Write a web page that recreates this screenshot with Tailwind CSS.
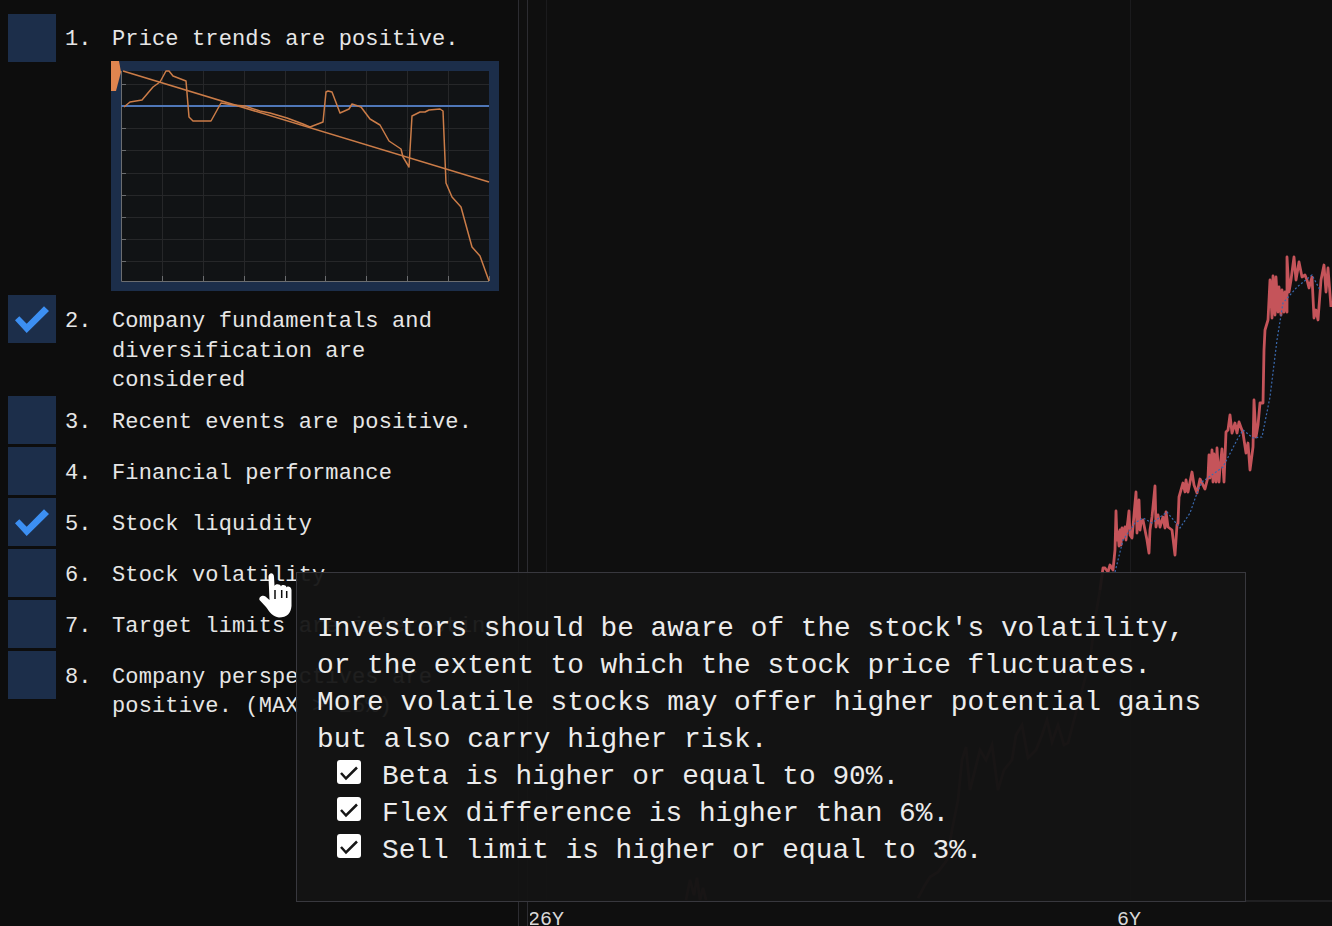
<!DOCTYPE html>
<html lang="en">
  <head>
    <meta charset="UTF-8" />
    <title>Checklist</title>
    <script src="https://cdn.jsdelivr.net/npm/@tailwindcss/browser@4"></script>
  </head>
  <body class="bg-[#0d0d0d]">
    <div class="relative w-[1332px] h-[926px] overflow-hidden flex text-[#e6e6e6] font-['Liberation_Mono',monospace] text-[22px] leading-[29.5px] tracking-[0.13px]">
      <!-- checklist -->
      <div class="w-[518px] shrink-0 pt-[14px] pl-2 flex flex-col">
        <div class="flex h-[47px]">
          <div class="w-12 h-12 shrink-0 bg-[#1c2e4a]"></div>
          <div class="w-[56px] shrink-0 pl-[9px] pt-[11px]">1.</div>
          <div class="pt-[11px] whitespace-nowrap">Price trends are positive.</div>
        </div>
        <div class="ml-[103px] w-[388px] h-[230px] border-[10px] border-[#1c2e4a] bg-[#111315]">
          <svg width="368" height="210" viewBox="121 71 368 210" fill="none" class="block overflow-visible">
            <path stroke="#262729" d="M121 84.500H489M121 128.500H489M121 150.500H489M121 173.500H489M121 195.500H489M121 217.500H489M121 239.500H489M121 261.500H489M162.500 71V281M203.500 71V281M244.500 71V281M285.500 71V281M325.500 71V281M366.500 71V281M407.500 71V281M448.500 71V281" />
            <path stroke="#6b6d70" d="M121.500 71V281.500H489M121 84.500H126M121 128.500H126M121 150.500H126M121 173.500H126M121 195.500H126M121 217.500H126M121 239.500H126M121 261.500H126M162.500 276V281M203.500 276V281M244.500 276V281M285.500 276V281M325.500 276V281M366.500 276V281M407.500 276V281M448.500 276V281M489.500 276V281" />
            <path stroke="#4f77b8" stroke-width="2" d="M121 106H489" />
            <path stroke="#cb7c48" stroke-width="1.600" d="M123 71L489 182" />
            <polyline stroke="#cb7c48" stroke-width="1.500" stroke-linejoin="round" points="124,107 130,102 142,100 153,87 160,82 166,71 169,71 173,76 186,81 189,117 193,121 211,121 221,103 233,105 245,106 260,111 270,113 287,118 303,124 310,127 323,122 326,92 328,91 332,92 340,113 349,109 352,104 361,107 370,119 380,125 389,141 401,149 403,157 409,167 412,116 420,112 425,112 429,110 440,109 443,111 446,183 452,197 461,207 472,247 480,256 489,281" />
            <polygon fill="#e0854f" points="111,61 119,61 121,72 116,91 111,91" />
          </svg>
        </div>
        <div class="flex mt-[4px] h-[98px]">
          <div class="w-12 h-12 shrink-0 bg-[#1c2e4a] flex">
            <svg width="48" height="48" viewBox="0 0 48 48"><polygon fill="#3c8ff2" points="7,25.300 18.700,38 41,16 36,11.300 18.700,28.700 11.300,21.300" /></svg>
          </div>
          <div class="w-[56px] shrink-0 pl-[9px] pt-[12px]">2.</div>
          <div class="pt-[12px] w-[390px]">Company fundamentals and diversification are considered</div>
        </div>
        <div class="flex mt-[3px]">
          <div class="w-12 h-12 shrink-0 bg-[#1c2e4a]"></div>
          <div class="w-[56px] shrink-0 pl-[9px] pt-[11.5px]">3.</div>
          <div class="pt-[11.5px]">Recent events are positive.</div>
        </div>
        <div class="flex mt-[3px]">
          <div class="w-12 h-12 shrink-0 bg-[#1c2e4a]"></div>
          <div class="w-[56px] shrink-0 pl-[9px] pt-[11.5px]">4.</div>
          <div class="pt-[11.5px]">Financial performance</div>
        </div>
        <div class="flex mt-[3px]">
          <div class="w-12 h-12 shrink-0 bg-[#1c2e4a] flex">
            <svg width="48" height="48" viewBox="0 0 48 48"><polygon fill="#3c8ff2" points="7,25.300 18.700,38 41,16 36,11.300 18.700,28.700 11.300,21.300" /></svg>
          </div>
          <div class="w-[56px] shrink-0 pl-[9px] pt-[11.5px]">5.</div>
          <div class="pt-[11.5px]">Stock liquidity</div>
        </div>
        <div class="flex mt-[3px]">
          <div class="w-12 h-12 shrink-0 bg-[#1c2e4a]"></div>
          <div class="w-[56px] shrink-0 pl-[9px] pt-[11.5px]">6.</div>
          <div class="pt-[11.5px]">Stock volatility</div>
        </div>
        <div class="flex mt-[3px]">
          <div class="w-12 h-12 shrink-0 bg-[#1c2e4a]"></div>
          <div class="w-[56px] shrink-0 pl-[9px] pt-[11.5px]">7.</div>
          <div class="pt-[11.5px]">Target limits are interesting</div>
        </div>
        <div class="flex mt-[3px]">
          <div class="w-12 h-12 shrink-0 bg-[#1c2e4a]"></div>
          <div class="w-[56px] shrink-0 pl-[9px] pt-[11.5px]">8.</div>
          <div class="pt-[11.5px] w-[390px]">Company perspectives are positive. (MAX &gt; 25%)</div>
        </div>
      </div>

      <!-- price chart -->
      <div class="relative flex-1 bg-[#0f0f0f] border-l border-[#2c2c31]">
        <svg width="813" height="926" viewBox="519 0 813 926" fill="none" class="absolute left-0 top-0">
          <path stroke="#2c2c31" d="M527.500 0V926" />
          <path stroke="#1b1b1d" d="M546.500 0V900M1130.500 0V900" />
          <path stroke="#333336" d="M519 901H1332" />
          <polyline stroke="#c5545a" stroke-opacity="0.5" stroke-width="2.500" points="686,900 690,880 694,895 697,878 700,900 703,888 706,900" />
          <polyline stroke="#c5545a" stroke-opacity="0.5" stroke-width="2.500" points="918,898 925,885 930,877 938,872 947,860 952,830 958,800 962,760 966,747 970,790 975,770 980,750 986,760 992,745 998,790 1004,770 1012,760 1016,735 1022,725 1028,758 1036,750 1042,735 1047,720 1052,742 1058,725 1064,745 1068,743 1074,720 1082,690 1090,660 1095,620 1100,590" />
          <polyline stroke="#c5545a" stroke-width="2.800" stroke-linejoin="round" points="1100,590 1103,568 1105,568 1108,572 1110,565 1113,570 1115,550 1116,511 1117,540 1118,532 1119,546 1120,530 1121,545 1122,528 1123,538 1125,527 1126,540 1127,528 1128,520 1129,511 1130,535 1132,538 1134,515 1136,492 1137,533 1139,500 1140,530 1141,523 1143,520 1145,530 1147,540 1149,553 1150,530 1152,517 1155,486 1156,527 1158,515 1160,527 1163,517 1165,528 1166,512 1168,527 1172,530 1175,555 1177,525 1178,523 1179,497 1183,483 1185,492 1186,480 1188,492 1192,472 1194,485 1197,493 1200,479 1205,489 1208,477 1209,455 1210,478 1212,450 1213,482 1214,454 1216,482 1217,448 1219,482 1220,468 1222,449 1224,482 1226,432 1228,430 1230,415 1232,433 1235,423 1237,433 1239,422 1243,433 1246,453 1248,443 1250,470 1253,447 1254,400 1256,437 1258,425 1260,403 1263,403 1264,350 1265,330 1268,320 1270,280 1272,318 1273,276 1275,315 1276,277 1278,312 1279,287 1281,315 1282,290 1284,312 1285,292 1287,312 1287,257 1289,292 1291,280 1294,257 1296,280 1299,262 1302,277 1305,275 1307,280 1309,288 1312,277 1314,318 1316,310 1318,320 1321,280 1324,265 1326,292 1328,268 1331,307" />
          <polyline stroke="#3a6ab0" stroke-width="1.200" stroke-dasharray="2 2" points="1115,572 1123,540 1135,523 1143,518 1152,523 1167,512 1180,528 1190,513 1197,493 1202,482 1223,467 1237,440 1243,430 1253,438 1262,437 1270,397 1277,340 1283,303 1297,287 1312,275 1320,290" />
        </svg>
        <div class="absolute left-[11px] top-[907px] w-[50px] overflow-hidden text-[20px] leading-[26px] text-[#d8d8d8] tracking-normal"><span class="block -ml-[2px]">26Y</span></div>
        <div class="absolute left-[598px] top-[907px] text-[20px] leading-[26px] text-[#d8d8d8] tracking-normal">6Y</div>
      </div>

      <!-- tooltip -->
      <div class="absolute left-[296px] top-[572px] w-[950px] h-[330px] bg-[#141414]/95 border border-[#38383e] pl-5 pt-[37px] text-[27.8px] leading-[37px] tracking-[0px] text-[#ececec]">
        <p class="w-[900px]">Investors should be aware of the stock's volatility, or the extent to which the stock price fluctuates. More volatile stocks may offer higher potential gains but also carry higher risk.</p>
        <div class="flex pl-5 gap-[21px]">
          <div class="w-6 h-6 shrink-0 mt-[2px] bg-white rounded-[3px] flex">
            <svg width="24" height="24" viewBox="0 0 24 24" fill="none"><path stroke="#161616" stroke-width="2.500" d="M4 13L9 18.500L20 7.500" /></svg>
          </div>
          <span>Beta is higher or equal to 90%.</span>
        </div>
        <div class="flex pl-5 gap-[21px]">
          <div class="w-6 h-6 shrink-0 mt-[2px] bg-white rounded-[3px] flex">
            <svg width="24" height="24" viewBox="0 0 24 24" fill="none"><path stroke="#161616" stroke-width="2.500" d="M4 13L9 18.500L20 7.500" /></svg>
          </div>
          <span>Flex difference is higher than 6%.</span>
        </div>
        <div class="flex pl-5 gap-[21px]">
          <div class="w-6 h-6 shrink-0 mt-[2px] bg-white rounded-[3px] flex">
            <svg width="24" height="24" viewBox="0 0 24 24" fill="none"><path stroke="#161616" stroke-width="2.500" d="M4 13L9 18.500L20 7.500" /></svg>
          </div>
          <span>Sell limit is higher or equal to 3%.</span>
        </div>
      </div>

      <!-- cursor -->
      <svg width="40" height="50" viewBox="255 570 40 50" class="absolute left-[255px] top-[570px]">
        <path fill="#fff" d="M268.500 577C268.500 572 274 572 274 577L274.500 586C275 583.500 280.500 583.500 281 586.500C281.500 584.500 286 584.500 286.500 587.500C287 586 291 586 291.500 590L291.500 606C291 613 287 617.500 279 617.500C273 617 269.500 612 266 607L259.500 600C258.500 596.500 263 594.500 265.500 596.500L269.500 600Z" />
        <path stroke="#0d0d0d" stroke-width="1.500" fill="none" d="M275 590V599M281.700 590V598M286.700 591V598" />
      </svg>
    </div>
  </body>
</html>
